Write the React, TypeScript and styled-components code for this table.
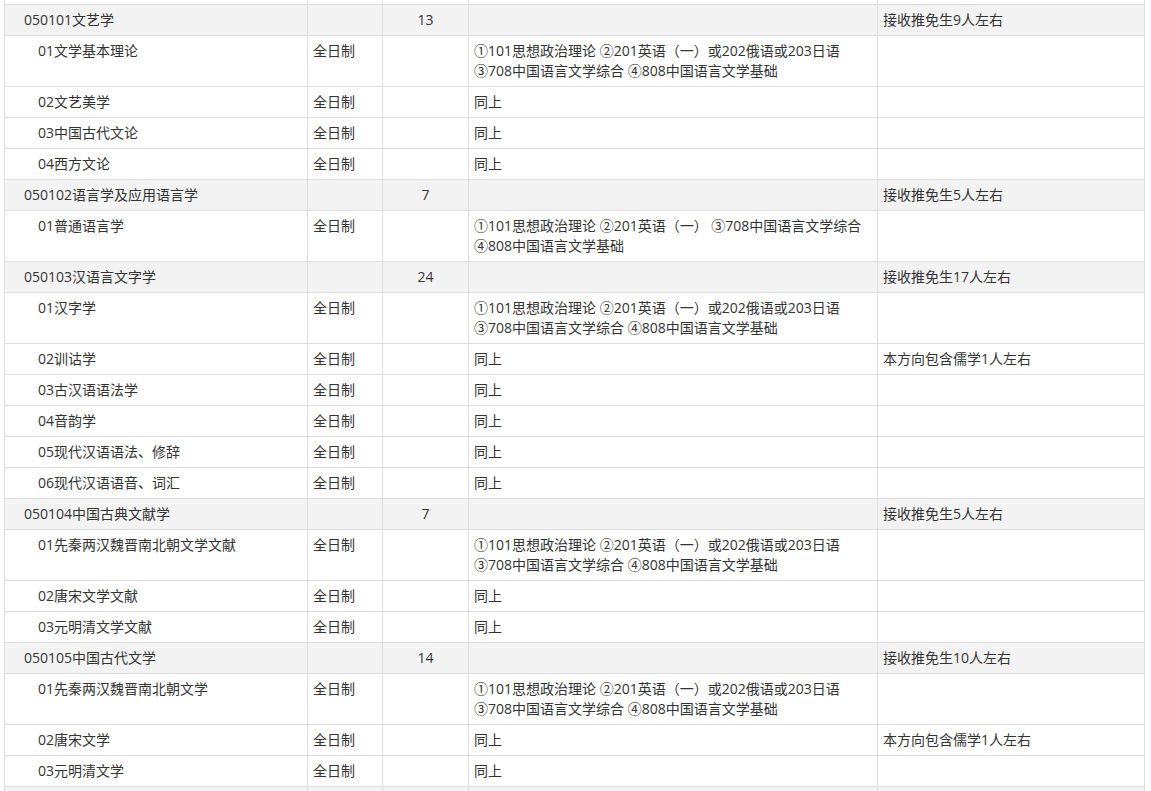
import React from "react";
import styled, { createGlobalStyle } from "styled-components";

const Global = createGlobalStyle`
  html, body {
    margin: 0;
    padding: 0;
    overflow: hidden;
    background: #fff;
  }
  body {
    font-family: "Open Sans", "Noto Sans CJK SC", sans-serif;
    color: #333;
  }
`;

const Page = styled.div`
  padding: 0 0 0 4px;
  margin-top: -27px;
`;

const Table = styled.table`
  width: 1140px;
  border-collapse: collapse;
  table-layout: fixed;
  font-size: 14px;
  line-height: 20px;
`;

const Col = styled.col<{ $w: number }>`
  width: ${(p) => p.$w}px;
`;

const Row = styled.tr<{ $major?: boolean }>`
  background: ${(p) => (p.$major ? "#f3f3f3" : "#fff")};
`;

const Cell = styled.td<{ $indent?: number; $center?: boolean }>`
  border: 1px solid #dddddd;
  height: 20px;
  padding: 5px 5px 5px ${(p) => p.$indent ?? 5}px;
  vertical-align: top;
  text-align: ${(p) => (p.$center ? "center" : "left")};
  white-space: normal;
  word-break: break-all;
`;

const Line = styled.div``;

type Entry = {
  major?: boolean;
  name?: string;
  mode?: string;
  count?: string;
  exam?: string[];
  note?: string;
};

const EXAM_A = [
  "①101思想政治理论 ②201英语（一）或202俄语或203日语",
  "③708中国语言文学综合 ④808中国语言文学基础",
];
const EXAM_B = [
  "①101思想政治理论 ②201英语（一） ③708中国语言文学综合",
  "④808中国语言文学基础",
];
const SAME = ["同上"];

const rows: Entry[] = [
  {},
  { major: true, name: "050101文艺学", count: "13", note: "接收推免生9人左右" },
  { name: "01文学基本理论", mode: "全日制", exam: EXAM_A },
  { name: "02文艺美学", mode: "全日制", exam: SAME },
  { name: "03中国古代文论", mode: "全日制", exam: SAME },
  { name: "04西方文论", mode: "全日制", exam: SAME },
  { major: true, name: "050102语言学及应用语言学", count: "7", note: "接收推免生5人左右" },
  { name: "01普通语言学", mode: "全日制", exam: EXAM_B },
  { major: true, name: "050103汉语言文字学", count: "24", note: "接收推免生17人左右" },
  { name: "01汉字学", mode: "全日制", exam: EXAM_A },
  { name: "02训诂学", mode: "全日制", exam: SAME, note: "本方向包含儒学1人左右" },
  { name: "03古汉语语法学", mode: "全日制", exam: SAME },
  { name: "04音韵学", mode: "全日制", exam: SAME },
  { name: "05现代汉语语法、修辞", mode: "全日制", exam: SAME },
  { name: "06现代汉语语音、词汇", mode: "全日制", exam: SAME },
  { major: true, name: "050104中国古典文献学", count: "7", note: "接收推免生5人左右" },
  { name: "01先秦两汉魏晋南北朝文学文献", mode: "全日制", exam: EXAM_A },
  { name: "02唐宋文学文献", mode: "全日制", exam: SAME },
  { name: "03元明清文学文献", mode: "全日制", exam: SAME },
  { major: true, name: "050105中国古代文学", count: "14", note: "接收推免生10人左右" },
  { name: "01先秦两汉魏晋南北朝文学", mode: "全日制", exam: EXAM_A },
  { name: "02唐宋文学", mode: "全日制", exam: SAME, note: "本方向包含儒学1人左右" },
  { name: "03元明清文学", mode: "全日制", exam: SAME },
  { major: true },
];

const WIDTHS = [303, 75, 86, 409, 267];

export default function App() {
  return (
    <>
      <Global />
      <Page>
        <Table>
          <colgroup>
            {WIDTHS.map((w, i) => (
              <Col key={i} $w={w} />
            ))}
          </colgroup>
          <tbody>
            {rows.map((r, i) => (
              <Row key={i} $major={r.major}>
                <Cell $indent={r.major ? 19 : 33}>{r.name}</Cell>
                <Cell>{r.mode}</Cell>
                <Cell $center>{r.count}</Cell>
                <Cell>
                  {r.exam?.map((l, j) => (
                    <Line key={j}>{l}</Line>
                  ))}
                </Cell>
                <Cell>{r.note}</Cell>
              </Row>
            ))}
          </tbody>
        </Table>
      </Page>
    </>
  );
}
